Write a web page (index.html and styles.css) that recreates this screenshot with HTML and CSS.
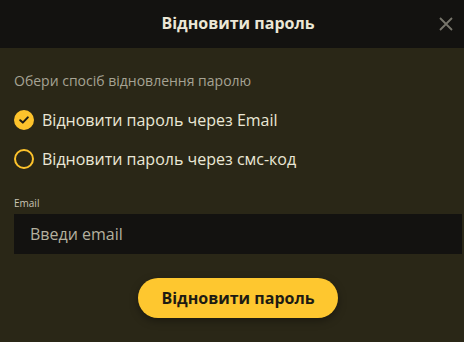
FILE: index.html
```html
<!DOCTYPE html>
<html lang="uk">
<head>
<meta charset="utf-8">
<link rel="stylesheet" href="styles.css">
</head>
<body>
<div class="modal">
  <div class="header">
    <div class="title">Відновити пароль</div>
    <button class="close" aria-label="close">
      <svg width="14" height="14" viewBox="0 0 14 14"><path d="M1 1L13 13M13 1L1 13" stroke="#77756b" stroke-width="1.8" fill="none"/></svg>
    </button>
  </div>
  <div class="content">
    <div class="subtitle">Обери спосіб відновлення паролю</div>
    <div class="options">
      <label class="option">
        <span class="radio checked">
          <svg width="10" height="8" viewBox="0 0 10 8"><path d="M1.2 4.2L3.8 6.6L8.8 1.4" stroke="#1d1b13" stroke-width="2" fill="none" stroke-linecap="round" stroke-linejoin="round"/></svg>
        </span>
        <span class="option-text">Відновити пароль через Email</span>
      </label>
      <label class="option">
        <span class="radio"></span>
        <span class="option-text">Відновити пароль через смс-код</span>
      </label>
    </div>
    <div class="field">
      <div class="field-label">Email</div>
      <div class="input">Введи email</div>
    </div>
    <div class="actions">
      <button class="submit">Відновити пароль</button>
    </div>
  </div>
</div>
</body>
</html>
```
FILE: styles.css
```css
html, body {
  margin: 0;
  padding: 0;
  background: #2a2717;
  overflow: hidden;
}
body {
  font-family: "Open Sans", "Noto Sans", sans-serif;
}
.modal {
  width: 476px;
  height: 342px;
  background: #2a2717;
}
.header {
  height: 48px;
  background: #131210;
  display: flex;
  align-items: center;
  justify-content: center;
  position: relative;
}
.title {
  color: #ebe7d6;
  font-size: 16px;
  font-weight: 700;
  margin-top: -2px;
}
.close {
  position: absolute;
  left: 439px;
  top: 17px;
  width: 14px;
  height: 14px;
  padding: 0;
  border: 0;
  background: none;
  display: flex;
}
.content {
  padding: 23px 14px 0;
  display: flex;
  flex-direction: column;
}
.subtitle {
  color: #a6a394;
  font-size: 14px;
  line-height: 20px;
}
.options {
  margin-top: 18px;
  display: flex;
  flex-direction: column;
  gap: 17px;
}
.option {
  display: flex;
  align-items: center;
  gap: 8px;
  height: 22px;
}
.radio {
  width: 20px;
  height: 20px;
  box-sizing: border-box;
  border: 2px solid #fdc32c;
  border-radius: 50%;
  display: flex;
  align-items: center;
  justify-content: center;
}
.radio.checked {
  background: #fdc32c;
}
.option-text {
  color: #ebe7d6;
  font-size: 16px;
  line-height: 22px;
}
.field {
  margin-top: 26px;
  display: flex;
  flex-direction: column;
}
.field-label {
  color: #c9c5b4;
  font-size: 10px;
  line-height: 14px;
  margin-bottom: 4px;
}
.input {
  height: 40px;
  background: #131210;
  color: #b4b09f;
  font-size: 16px;
  line-height: 40px;
  padding-left: 16px;
}
.actions {
  margin-top: 24px;
  display: flex;
  justify-content: center;
}
.submit {
  width: 200px;
  height: 40px;
  border: 0;
  border-radius: 20px;
  background: #fec72f;
  color: #1d1b13;
  font-family: "Open Sans", "Noto Sans", sans-serif;
  font-size: 16px;
  font-weight: 700;
  box-shadow: 0 3px 8px rgba(0, 0, 0, 0.35);
  padding: 0;
}
```
